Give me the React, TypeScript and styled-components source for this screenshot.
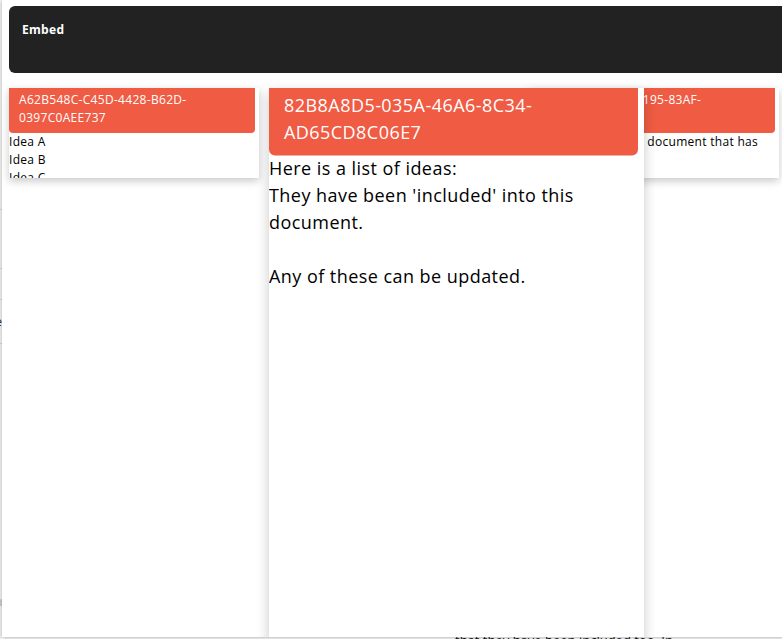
import React from "react";
import styled, { createGlobalStyle } from "styled-components";

const GlobalStyle = createGlobalStyle`
  html, body { margin: 0; padding: 0; background: #ffffff; }
  body { font-family: "Open Sans", "Noto Sans", sans-serif; }
`;

const Page = styled.div`
  position: relative;
  width: 782px;
  height: 639px;
  overflow: hidden;
  display: flex;
  background: #ffffff;
`;

const Sidebar = styled.div`
  width: 2px;
  flex: none;
  display: flex;
  flex-direction: column;
  background: #f4f4f4;
  overflow: hidden;
`;

const SideRow = styled.div<{ $h: number }>`
  height: ${(p) => p.$h}px;
  flex: none;
  border-bottom: 1px solid #d8d8d8;
  font-size: 12px;
  line-height: ${(p) => p.$h}px;
  color: #333;
  display: flex;
  justify-content: flex-end;
  white-space: nowrap;
`;

const SideBlock = styled.div`
  height: 6px;
  background: #cfcfcf;
  flex: none;
`;

const BgMain = styled.div`
  flex: 1;
  padding: 631px 0 0 453px;
  font-size: 13px;
  color: #111;
  white-space: nowrap;
`;

const Overlay = styled.div`
  position: absolute;
  left: 2px;
  top: 0;
  width: 810px;
  height: 637px;
  background: #ffffff;
  box-shadow: 0 1px 4px rgba(0, 0, 0, 0.3);
  overflow: hidden;
  padding: 6px 0 0 7px;
  box-sizing: border-box;
  display: flex;
  flex-direction: column;
`;

const EmbedBar = styled.div`
  height: 67px;
  flex: none;
  background: #222222;
  border-radius: 6px;
  padding: 15px 13px 14px;
  box-sizing: border-box;
  color: #ffffff;
  font-size: 12px;
  font-weight: 700;
  line-height: 18px;
  letter-spacing: 0.3px;
`;

const CardRow = styled.div`
  display: flex;
  gap: 10px;
  margin-top: 15px;
  align-items: flex-start;
`;

const Card = styled.div<{ $focused?: boolean }>`
  width: 250px;
  height: ${(p) => (p.$focused ? 400 : 90)}px;
  flex: none;
  background: #ffffff;
  overflow: hidden;
  box-shadow: 0 3px 8px rgba(0, 0, 0, 0.22);
  position: relative;
  z-index: ${(p) => (p.$focused ? 2 : 1)};
  transform: ${(p) => (p.$focused ? "scale(1.5)" : "none")};
  transform-origin: top left;
`;

const CardHeader = styled.div`
  width: 246px;
  box-sizing: border-box;
  background: #f05b43;
  color: #ffffff;
  border-radius: 0 0 4px 4px;
  padding: 3px 10px 6px;
  font-size: 12px;
  line-height: 18px;
  letter-spacing: 0.3px;
`;

const HeaderLine = styled.span`
  display: block;
  white-space: nowrap;
`;

const CardBody = styled.div`
  font-size: 12px;
  line-height: 18px;
  letter-spacing: 0.3px;
  color: #000000;
  white-space: pre-wrap;
`;

const cards = [
  {
    id: "A62B548C-C45D-4428-B62D-\n0397C0AEE737",
    body: "Idea A\nIdea B\nIdea C\nIdea D",
  },
  {
    id: "82B8A8D5-035A-46A6-8C34-\nAD65CD8C06E7",
    body:
      "Here is a list of ideas:\nThey have been 'included' into this document.\n\nAny of these can be updated.",
    focused: true,
  },
  {
    id: "5B1F0E2A-7C3B-4195-83AF-\n1C08E7A2B4",
    body: "Here is the text in a document that has\nideas.",
  },
];

export default function App() {
  return (
    <>
      <GlobalStyle />
      <Page>
        <Sidebar>
          <SideRow $h={209} />
          <SideRow $h={58} />
          <SideRow $h={30} />
          <SideRow $h={43}>Recipe</SideRow>
          <SideRow $h={255} />
          <SideBlock />
        </Sidebar>
        <BgMain>that they have been included too. In</BgMain>
        <Overlay>
          <EmbedBar>Embed</EmbedBar>
          <CardRow>
            {cards.map((c) => (
              <Card key={c.id} $focused={c.focused}>
                <CardHeader>
                  {c.id.split("\n").map((l) => (
                    <HeaderLine key={l}>{l}</HeaderLine>
                  ))}
                </CardHeader>
                <CardBody>{c.body}</CardBody>
              </Card>
            ))}
          </CardRow>
        </Overlay>
      </Page>
    </>
  );
}
